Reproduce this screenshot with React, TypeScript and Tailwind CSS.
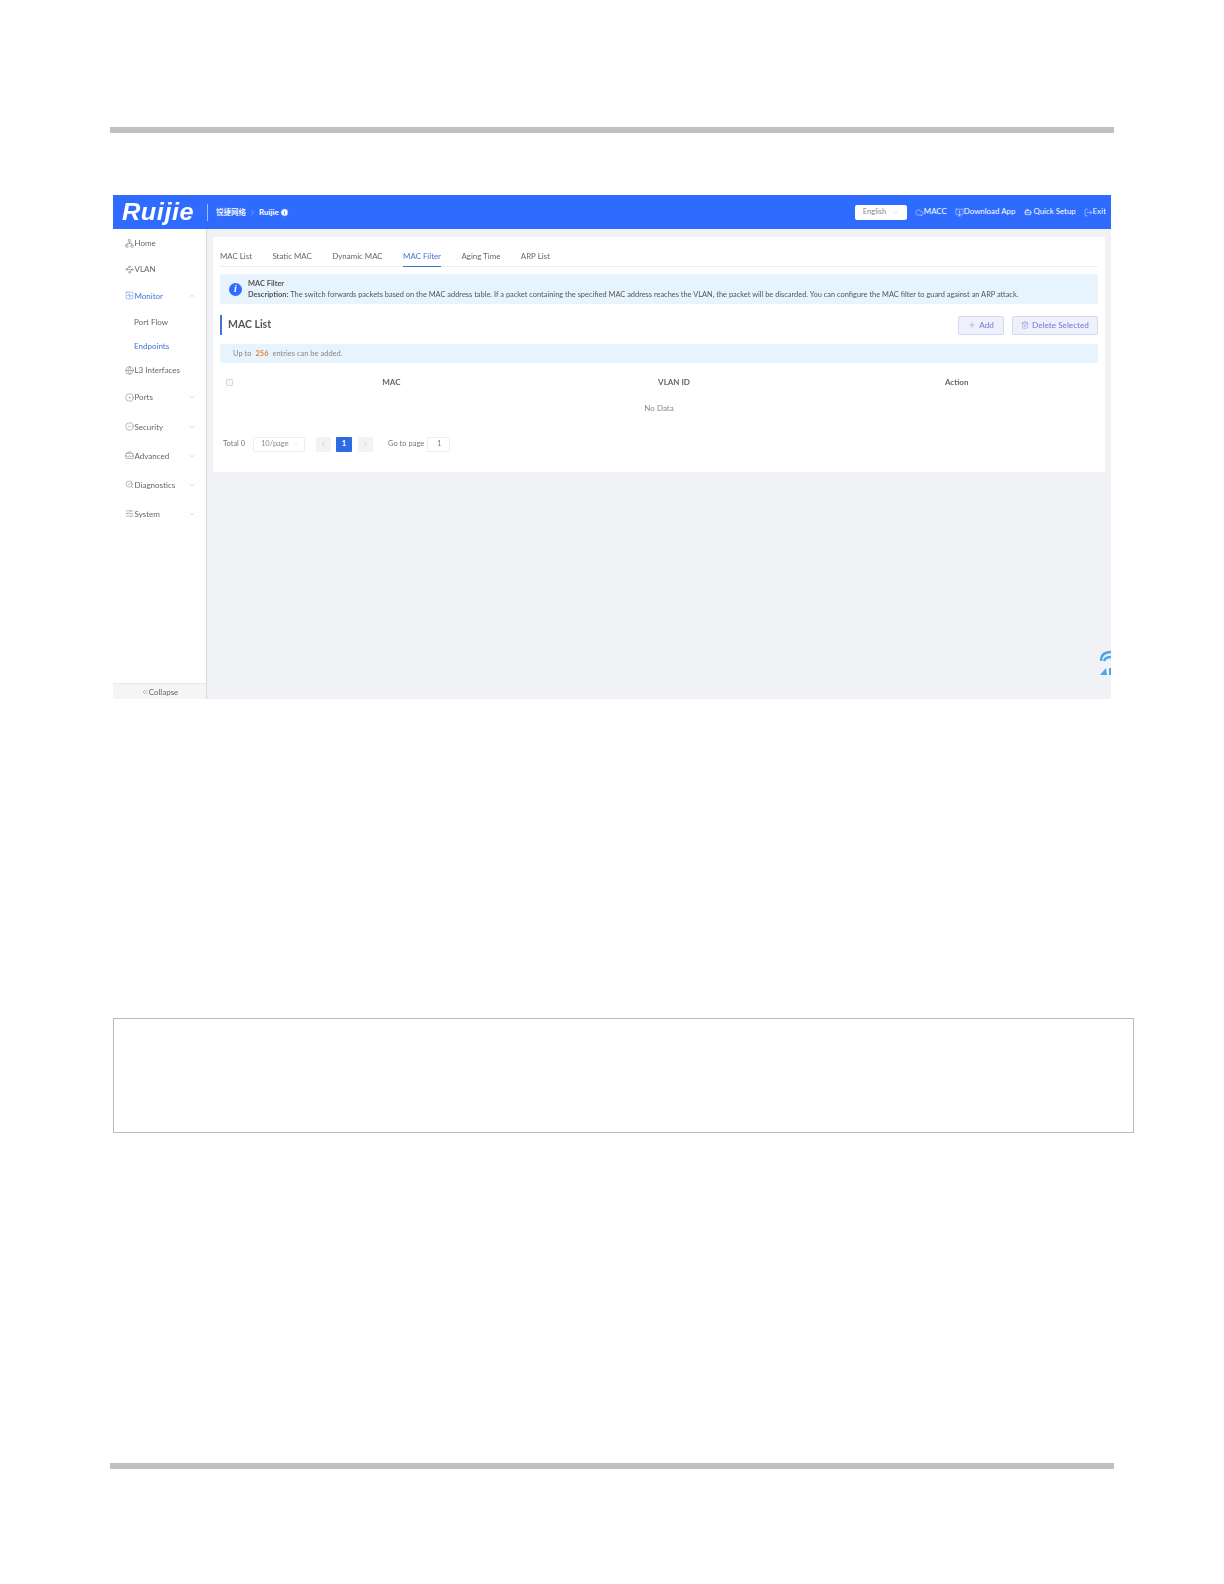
import { Network, Waypoints, SquareActivity, Globe, CircleDot, CircleCheck, BriefcaseBusiness, SearchCheck, SlidersHorizontal, ChevronDown, ChevronUp, ChevronLeft, ChevronRight, ChevronsLeft, Cloud, MonitorDown, Bot, LogOut, Plus, Trash2, Info } from 'lucide-react';

const navItems = [
  { label: 'Home', icon: Network, height: 'h-[28px]', arrow: null },
  { label: 'VLAN', icon: Waypoints, height: 'h-[24px]', arrow: null },
  { label: 'Monitor', icon: SquareActivity, height: 'h-[29px]', arrow: 'up', active: true },
  { label: 'Port Flow', height: 'h-[24px]', sub: true },
  { label: 'Endpoints', height: 'h-[24px]', sub: true, active: true },
  { label: 'L3 Interfaces', icon: Globe, height: 'h-[24px]', arrow: null },
  { label: 'Ports', icon: CircleDot, height: 'h-[30px]', arrow: 'down' },
  { label: 'Security', icon: CircleCheck, height: 'h-[29px]', arrow: 'down' },
  { label: 'Advanced', icon: BriefcaseBusiness, height: 'h-[29px]', arrow: 'down' },
  { label: 'Diagnostics', icon: SearchCheck, height: 'h-[29px]', arrow: 'down' },
  { label: 'System', icon: SlidersHorizontal, height: 'h-[29px]', arrow: 'down' },
];

const tabs = [
  { label: 'MAC List', margin: 'ml-0' },
  { label: 'Static MAC', margin: 'ml-[20.5px]' },
  { label: 'Dynamic MAC', margin: 'ml-[20.5px]' },
  { label: 'MAC Filter', margin: 'ml-[20.5px]', active: true },
  { label: 'Aging Time', margin: 'ml-[20.5px]' },
  { label: 'ARP List', margin: 'ml-[20.5px]' },
];

function Sidebar() {
  return (
    <div className="w-[94px] shrink-0 bg-white border-r border-[#d9d9d9] flex flex-col text-[8px]">
      <div className="flex-1">
        {navItems.map((item) => {
          const Icon = item.icon;
          return (
            <div
              key={item.label}
              className={`flex items-center ${item.height} ${item.sub ? 'pl-[21px]' : 'pl-[12px]'} pr-[10px] ${
                item.active ? 'text-[#3f74d6]' : 'text-[#666]'
              }`}
            >
              {Icon && <Icon className="w-[9px] h-[9px] shrink-0 mr-[0.5px]" strokeWidth={1.2} />}
              <span>{item.label}</span>
              {item.arrow === 'up' && <ChevronUp className="w-[8px] h-[8px] ml-auto text-[#aaa]" strokeWidth={1.2} />}
              {item.arrow === 'down' && <ChevronDown className="w-[8px] h-[8px] ml-auto text-[#aaa]" strokeWidth={1.2} />}
            </div>
          );
        })}
      </div>
      <div className="h-[16px] bg-[#f5f5f5] border-t border-[#e8e8e8] flex items-center justify-center text-[#666]">
        <ChevronsLeft className="w-[8px] h-[8px]" strokeWidth={1.2} />
        <span>Collapse</span>
      </div>
    </div>
  );
}

function Header() {
  return (
    <div className="h-[34px] bg-[#2f6bff] flex items-center text-white shrink-0">
      <div className="w-[94px] pl-[9px]">
        <div className="origin-left scale-x-[1.1] text-[23px] leading-none font-bold italic font-['Liberation_Sans',sans-serif] tracking-[0.5px]">Ruijie</div>
      </div>
      <div className="w-px h-[17px] bg-[#9dbcff]" />
      <span className="ml-[8px] font-['Noto_Sans_CJK_SC',sans-serif] font-medium text-[7.5px]">锐捷网络</span>
      <ChevronRight className="w-[9px] h-[9px] mx-[2px] text-[#cfdcff]" strokeWidth={1.2} />
      <span className="font-bold text-[8px]">Ruijie</span>
      <Info className="w-[9px] h-[9px] ml-[1px] fill-white text-[#2f6bff]" strokeWidth={2} />
      <div className="ml-auto flex items-center pr-[5px] text-[7.9px]">
        <div className="w-[52px] h-[15px] bg-white rounded-[2px] flex items-center pl-[8px] pr-[8px] text-[#888] text-[7.5px]">
          English
          <ChevronDown className="w-[7px] h-[7px] ml-auto text-[#aaa]" strokeWidth={1.2} />
        </div>
        <Cloud className="w-[9px] h-[9px] ml-[8px]" strokeWidth={1.2} />
        <span>MACC</span>
        <MonitorDown className="w-[9px] h-[9px] ml-[8px]" strokeWidth={1.2} />
        <span>Download App</span>
        <Bot className="w-[8px] h-[8px] ml-[9px]" strokeWidth={2} />
        <span className="ml-[1px]">Quick Setup</span>
        <LogOut className="w-[9px] h-[9px] ml-[8px]" strokeWidth={1.2} />
        <span>Exit</span>
      </div>
    </div>
  );
}

function MacFilterCard() {
  return (
    <div className="bg-white rounded-[2px] h-[235px] px-[7px] text-[#666]">
      <div className="flex h-[30px] pt-[12px] border-b border-[#eeeeee] text-[7.9px]">
        {tabs.map((tab) => (
          <div
            key={tab.label}
            className={`${tab.margin} h-[18px] leading-[14px] -mb-px ${
              tab.active ? 'text-[#3f74d6] border-b border-[#3f74d6]' : ''
            }`}
          >
            {tab.label}
          </div>
        ))}
      </div>

      <div className="mt-[7px] h-[30px] bg-[#e8f4fd] flex items-center pl-[9px] rounded-[2px]">
        <div className="w-[13px] h-[13px] rounded-full bg-[#2f6bff] text-white flex items-center justify-center text-[10px] font-bold italic font-['Liberation_Serif',serif] leading-none">i</div>
        <div className="ml-[6px] text-[7.43px] leading-[11px] text-[#555]">
          <div className="font-bold">MAC Filter</div>
          <div>
            <span className="font-bold">Description: </span>
            The switch forwards packets based on the MAC address table. If a packet containing the specified MAC address reaches the VLAN, the packet will be discarded. You can configure the MAC filter to guard against an ARP attack.
          </div>
        </div>
      </div>

      <div className="mt-[11px] h-[20px] flex items-center">
        <div className="h-full w-[2px] bg-[#3f74d6]" />
        <div className="ml-[6px] text-[10.5px] font-bold text-[#555]">MAC List</div>
        <button className="ml-auto w-[46px] h-[19px] bg-[#eef0fb] border border-[#d5d9ee] rounded-[2px] flex items-center justify-center text-[#6f79d8] text-[8.2px]">
          <Plus className="w-[8px] h-[8px] mr-[3px]" strokeWidth={1.2} />
          Add
        </button>
        <button className="ml-[8px] w-[86px] h-[19px] bg-[#eef0fb] border border-[#d5d9ee] rounded-[2px] flex items-center justify-center text-[#6f79d8] text-[8.2px]">
          <Trash2 className="w-[8px] h-[8px] mr-[3px]" strokeWidth={1.2} />
          Delete Selected
        </button>
      </div>

      <div className="mt-[9px] h-[19px] bg-[#e8f4fd] rounded-[2px] flex items-center pl-[13px] text-[7.5px] text-[#888]">
        Up to<span className="mx-[4px] text-[#e8843c] font-bold">256</span>entries can be added.
      </div>

      <div className="mt-[10px] h-[18px] flex items-center text-[8px] font-bold text-[#666]">
        <div className="w-[30px] pl-[6px]">
          <div className="w-[7px] h-[7px] border border-[#d9d9d9] rounded-[1px] bg-[#f7f7f7]" />
        </div>
        <div className="flex-1 text-center">MAC</div>
        <div className="flex-1 text-center">VLAN ID</div>
        <div className="flex-1 text-center">Action</div>
      </div>
      <div className="h-[45px] pt-[10px] text-center text-[8px] leading-[14px] text-[#888]">No Data</div>

      <div className="flex items-center h-[16px] text-[7.5px] text-[#777]">
        <span className="ml-[3px] w-[30px]">Total 0</span>
        <div className="w-[52px] h-[15px] border border-[#eeeeee] rounded-[2px] flex items-center pl-[7px] pr-[5px] text-[#888]">
          10/page
          <ChevronDown className="w-[6px] h-[6px] ml-auto text-[#bbb]" strokeWidth={1.2} />
        </div>
        <div className="ml-[11px] w-[15px] h-[15px] bg-[#f3f3f3] rounded-[1px] flex items-center justify-center text-[#999]">
          <ChevronLeft className="w-[7px] h-[7px]" strokeWidth={1.4} />
        </div>
        <div className="ml-[5px] w-[16px] h-[15px] bg-[#2f6be0] rounded-[1px] flex items-center justify-center text-white font-bold">1</div>
        <div className="ml-[6px] w-[15px] h-[15px] bg-[#f3f3f3] rounded-[1px] flex items-center justify-center text-[#999]">
          <ChevronRight className="w-[7px] h-[7px]" strokeWidth={1.4} />
        </div>
        <span className="ml-[15px] w-[39px]">Go to page</span>
        <div className="w-[23px] h-[15px] border border-[#eeeeee] rounded-[1px] flex items-center pl-[9px]">1</div>
      </div>
    </div>
  );
}

export default function App() {
  return (
    <div className="relative w-[1224px] h-[1584px] bg-white overflow-hidden font-['Lato',sans-serif]">
      <div className="ml-[110px] mt-[127px] w-[1004px] h-[6px] bg-[#c0c0c0]" />

      <div className="relative ml-[113px] mt-[62px] w-[998px] h-[504px] flex flex-col text-[8.5px] overflow-hidden blur-[0.4px]">
        <Header />
        <div className="flex flex-1 min-h-0">
          <Sidebar />
          <div className="flex-1 bg-[#f0f2f5] pt-[8px] pl-[6px] pr-[6px]">
            <MacFilterCard />
          </div>
        </div>
        {/* support widget, cut off by the right edge */}
        <svg className="absolute right-0 top-[455px]" width="11" height="26" viewBox="0 0 11 26" fill="none">
          <path d="M1 11 C1 5 5 2 11 2" stroke="#4aa8e8" strokeWidth="2.5" />
          <path d="M4 11 C5 8 8 7 11 7" stroke="#4aa8e8" strokeWidth="2.5" />
          <path d="M0 25 L6 18 L7 25 Z" fill="#4aa8e8" />
          <rect x="9" y="18" width="2" height="7" fill="#4aa8e8" />
        </svg>
      </div>

      <div className="ml-[113px] mt-[319px] w-[1021px] h-[115px] border border-[#bbbbbb]" />

      <div className="ml-[110px] mt-[330px] w-[1004px] h-[6px] bg-[#c0c0c0]" />
    </div>
  );
}
